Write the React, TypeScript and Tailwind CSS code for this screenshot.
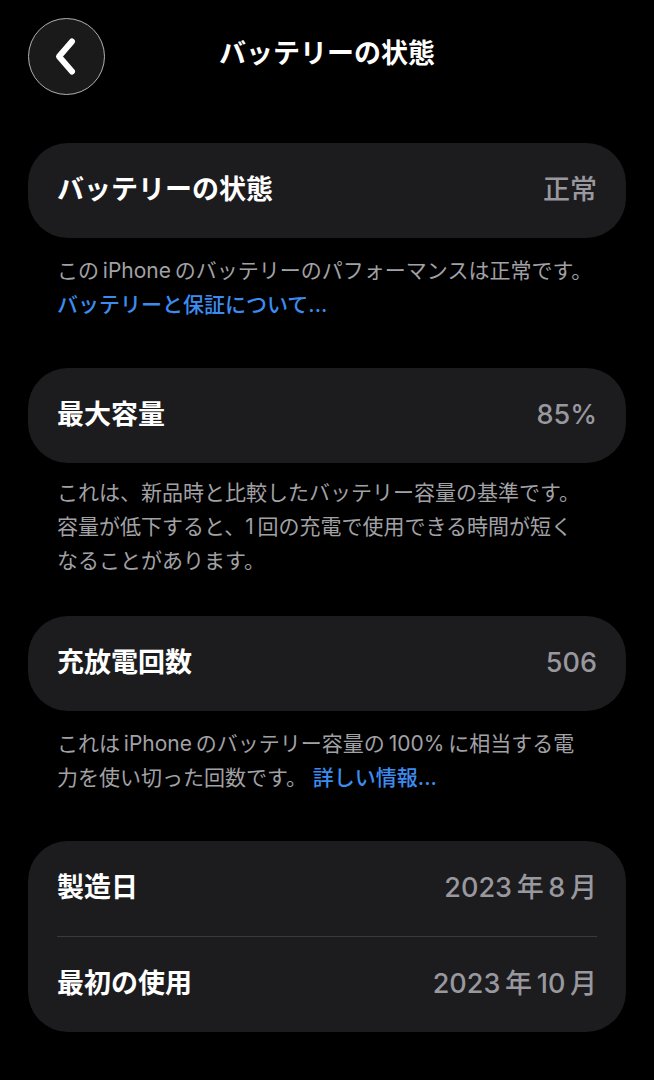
import React from "react";

const font = { fontFamily: 'Inter, "Noto Sans CJK JP", "Noto Sans", sans-serif' };

// thin space used where iOS puts automatic spacing between Latin and kana/kanji
const T = "\u2009";

const Row = ({ label, value }: { label: string; value: string }) => (
  <div className="flex h-[95px] items-center justify-between px-[29px]">
    <span className="text-[27px] font-bold text-white">{label}</span>
    <span className="text-[27px] font-medium text-[#98989e]">{value}</span>
  </div>
);

const Card = ({ children }: { children: React.ReactNode }) => (
  <div className="rounded-[40px] bg-[#1c1c1e]">{children}</div>
);

const Note = ({ children, className = "" }: { children: React.ReactNode; className?: string }) => (
  <p className={`px-[29px] text-[21px] leading-[34px] text-[#a1a1a6] whitespace-nowrap ${className}`}>{children}</p>
);

export default function App() {
  return (
    <div style={font} className="min-h-[1080px] w-full bg-black px-[28px] pt-[18px]">
      {/* Header */}
      <div className="grid grid-cols-[77px_1fr_77px] items-center">
        <button className="flex h-[77px] w-[77px] items-center justify-center rounded-full border border-[#b0b0b0] bg-[#1a1a1a]">
          <svg width="30" height="40" viewBox="0 0 30 40" fill="none">
            <path d="M20 4.5 L7 19.5 L20 34.5" stroke="white" strokeWidth="6" strokeLinecap="round" strokeLinejoin="round" />
          </svg>
        </button>
        <h1 className="mb-[4px] text-center text-[27px] font-bold text-white">バッテリーの状態</h1>
        <div />
      </div>

      <div className="mt-[48px]">
        <Card>
          <Row label="バッテリーの状態" value="正常" />
        </Card>
        <Note className="mt-[16px]">
          この{T}iPhone{T}のバッテリーのパフォーマンスは正常です。
          <br />
          <span className="font-medium text-[#3c8cf0]">バッテリーと保証について...</span>
        </Note>
      </div>

      <div className="mt-[46px]">
        <Card>
          <Row label="最大容量" value="85%" />
        </Card>
        <Note className="mt-[13px]">
          これは、新品時と比較したバッテリー容量の基準です。
          <br />
          容量が低下すると、1{T}回の充電で使用できる時間が短く
          <br />
          なることがあります。
        </Note>
      </div>

      <div className="mt-[38px]">
        <Card>
          <Row label="充放電回数" value="506" />
        </Card>
        <Note className="mt-[16px]">
          これは{T}iPhone{T}のバッテリー容量の{T}100%{T}に相当する電
          <br />
          力を使い切った回数です。 <span className="font-medium text-[#3c8cf0]">詳しい情報...</span>
        </Note>
      </div>

      <div className="mt-[46px]">
        <Card>
          <Row label="製造日" value={`2023${T}年${T}8${T}月`} />
          <div className="mx-[29px] h-px bg-[#3a3a3c]" />
          <Row label="最初の使用" value={`2023${T}年${T}10${T}月`} />
        </Card>
      </div>
    </div>
  );
}
